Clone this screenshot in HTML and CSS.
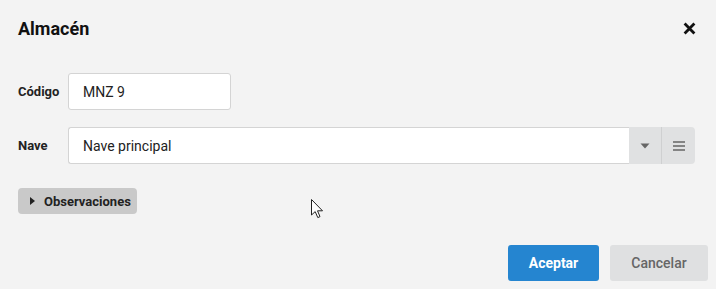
FILE: index.html
```html
<!DOCTYPE html>
<html lang="es">
<head>
<meta charset="utf-8">
<link rel="stylesheet" href="styles.css">
</head>
<body>
<div class="dialog">
  <header class="head">
    <h1 class="title">Almacén</h1>
    <button class="close" aria-label="Cerrar">
      <svg width="13" height="13" viewBox="0 0 13 13"><path d="M1.6 1.6 L11.4 11.4 M11.4 1.6 L1.6 11.4" stroke="#111" stroke-width="2.8" stroke-linecap="butt"/></svg>
    </button>
  </header>
  <div class="form">
    <div class="row">
      <label class="label">Código</label>
      <div class="input short">MNZ 9</div>
    </div>
    <div class="row">
      <label class="label">Nave</label>
      <div class="combo">
        <div class="input grow">Nave principal</div>
        <button class="addon arrow"><svg width="10" height="6" viewBox="0 0 10 6"><path d="M0.5 0.5 L9.5 0.5 L5 5.5 Z" fill="#666"/></svg></button>
        <button class="addon menu"><svg width="12" height="10" viewBox="0 0 12 10"><path d="M0 1 H12 M0 5 H12 M0 9 H12" stroke="#666" stroke-width="1.5"/></svg></button>
      </div>
    </div>
    <div class="obs-row">
      <button class="obs"><svg width="5" height="8" viewBox="0 0 5 8"><path d="M0 0 L5 4 L0 8 Z" fill="#222"/></svg>Observaciones</button>
    </div>
  </div>
  <footer class="foot">
    <button class="btn primary">Aceptar</button>
    <button class="btn secondary">Cancelar</button>
  </footer>
  <svg class="cursor" width="13" height="20" viewBox="0 0 13 20"><path d="M0.5 0.5 L0.5 16 L4.2 12.6 L6.8 18.6 L9 17.6 L6.5 11.8 L11.5 11.8 Z" fill="#fff" stroke="#222" stroke-width="1" stroke-linejoin="round"/></svg>
</div>
</body>
</html>
```
FILE: styles.css
```css
* { box-sizing: border-box; }
html, body { margin: 0; padding: 0; }
body {
  background: #f3f3f3;
  font-family: Roboto, "Liberation Sans", sans-serif;
  color: #222;
  width: 716px;
  height: 289px;
  overflow: hidden;
}
.dialog {
  position: relative;
  width: 716px;
  height: 289px;
  padding: 0 20px 0 18px;
  display: flex;
  flex-direction: column;
}
.head {
  display: flex;
  align-items: center;
  justify-content: space-between;
  height: 57px;
}
.title {
  margin: 0;
  font-size: 18px;
  font-weight: 700;
  color: #111;
}
.close {
  border: 0;
  background: none;
  padding: 0;
  width: 13px;
  height: 13px;
  display: flex;
}
.form {
  display: flex;
  flex-direction: column;
  padding-top: 16px;
}
.row {
  display: flex;
  align-items: center;
  height: 37px;
  margin-bottom: 17px;
}
.label {
  width: 50px;
  font-size: 13px;
  font-weight: 700;
  color: #222;
}
.input {
  height: 37px;
  background: #fff;
  border: 1px solid #d4d4d4;
  border-radius: 3px;
  padding: 0 14px;
  display: flex;
  align-items: center;
  font-size: 14px;
  color: #222;
}
.short { width: 163px; }
.combo {
  flex: 1;
  display: flex;
  height: 37px;
  margin-right: 1px;
}
.grow {
  flex: 1;
  border-radius: 3px 0 0 3px;
  border-right: 0;
}
.addon {
  width: 33px;
  height: 37px;
  border: 0;
  background: #e0e1e2;
  padding: 0;
  display: flex;
  align-items: center;
  justify-content: center;
}
.arrow { border-right: 1px solid #cfd0d1; }
.menu { border-radius: 0 4px 4px 0; }
.obs-row {
  display: flex;
  padding-top: 7px;
}
.obs {
  height: 26px;
  width: 119px;
  border: 0;
  border-radius: 4px;
  background: #c9c9c9;
  font-family: inherit;
  font-size: 13px;
  font-weight: 700;
  color: #222;
  display: flex;
  align-items: center;
  gap: 9px;
  padding: 0 0 0 12px;
}
.foot {
  margin-top: auto;
  display: flex;
  justify-content: flex-end;
  gap: 11px;
  padding: 0 0 8px 0;
  margin-right: -12px;
}
.btn {
  height: 36px;
  border: 0;
  border-radius: 3px;
  font-family: inherit;
  font-size: 14px;
  font-weight: 700;
}
.primary {
  width: 91px;
  background: #2585d0;
  color: #fff;
}
.secondary {
  width: 98px;
  background: #dfe0e1;
  color: #666;
  font-weight: 500;
}
.cursor {
  position: absolute;
  left: 311px;
  top: 199px;
}
```
